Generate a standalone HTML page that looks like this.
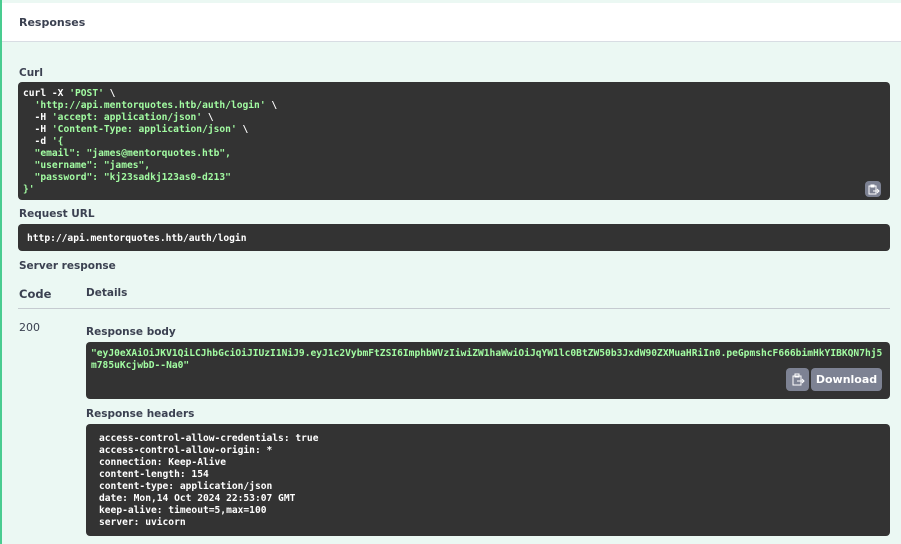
<!DOCTYPE html>
<html><head><meta charset="utf-8"><style>
*{margin:0;padding:0;box-sizing:border-box}
body{width:901px;height:544px;overflow:hidden;background:#ebf8f3;font-family:"DejaVu Sans","Liberation Sans",sans-serif;color:#3b4151;position:relative}
.abs{position:absolute}
.lbl{position:absolute;font-size:10.5px;font-weight:bold;color:#3b4151}
.box{position:absolute;background:#333;border-radius:4px}
pre{font-family:"DejaVu Sans Mono","Liberation Mono",monospace;font-size:9.6px;font-weight:bold;line-height:12px;color:#fff;white-space:pre}
.g{color:#a2fca2}
.btn{position:absolute;background:#7d8293;border-radius:4px}
</style></head><body>
<div class="abs" style="left:0;top:0;width:2px;height:544px;background:#49cc90"></div>
<div class="abs" style="left:2px;top:3px;width:899px;height:39px;background:#fff;border-bottom:1px solid #d8dde3"></div>
<div class="lbl" style="left:19px;top:16px;font-size:11px">Responses</div>

<div class="lbl" style="left:19px;top:67px">Curl</div>
<div class="box" style="left:18px;top:82px;width:872px;height:118px"><pre style="position:absolute;left:5px;top:6px">curl -X <span class="g">'POST'</span> \
  <span class="g">'http://api.mentorquotes.htb/auth/login'</span> \
  -H <span class="g">'accept: application/json'</span> \
  -H <span class="g">'Content-Type: application/json'</span> \
  -d <span class="g">'{
  "email": "james@mentorquotes.htb",
  "username": "james",
  "password": "kj23sadkj123as0-d213"
}'</span></pre>
<div class="btn" style="left:847px;top:99px;width:16px;height:16px"><svg width="16" height="16" viewBox="0 0 16 16" fill="none" stroke="#fff" stroke-width="1"><rect x="4" y="5" width="7" height="8"/><rect x="6" y="4" width="3" height="2"/><path d="M8 10h6M12 8l2 2-2 2"/></svg></div>
</div>

<div class="lbl" style="left:19px;top:208px">Request URL</div>
<div class="box" style="left:18px;top:224px;width:872px;height:27px"><pre style="position:absolute;left:9px;top:9px">http://api.mentorquotes.htb/auth/login</pre></div>

<div class="lbl" style="left:19px;top:260px">Server response</div>
<div class="lbl" style="left:19px;top:287px;font-size:11.5px">Code</div>
<div class="lbl" style="left:86px;top:287px">Details</div>
<div class="abs" style="left:18px;top:308px;width:872px;height:1px;background:#c5cbd0"></div>
<div class="abs" style="left:19px;top:321px;font-size:11px;color:#3b4151">200</div>

<div class="lbl" style="left:86px;top:326px">Response body</div>
<div class="box" style="left:86px;top:342px;width:804px;height:57px"><pre class="g" style="position:absolute;left:5px;top:6px">"eyJ0eXAiOiJKV1QiLCJhbGciOiJIUzI1NiJ9.eyJ1c2VybmFtZSI6ImphbWVzIiwiZW1haWwiOiJqYW1lc0BtZW50b3JxdW90ZXMuaHRiIn0.peGpmshcF666bimHkYIBKQN7hj5
m785uKcjwbD--Na0"</pre>
<div class="btn" style="left:700px;top:26px;width:23px;height:23px"><svg width="23" height="23" viewBox="0 0 23 23" fill="none" stroke="#fff" stroke-width="1"><rect x="7" y="8" width="8" height="9"/><rect x="9" y="6" width="4" height="3"/><path d="M11 13h7M16 11l2 2-2 2"/></svg></div>
<div class="btn" style="left:725px;top:26px;width:71px;height:23px;color:#fff;font-size:11px;font-weight:bold;text-align:center;line-height:23px">Download</div>
</div>

<div class="lbl" style="left:86px;top:408px">Response headers</div>
<div class="box" style="left:86px;top:424px;width:804px;height:112px"><pre style="position:absolute;left:13px;top:9px">access-control-allow-credentials: true
access-control-allow-origin: *
connection: Keep-Alive
content-length: 154
content-type: application/json
date: Mon,14 Oct 2024 22:53:07 GMT
keep-alive: timeout=5,max=100
server: uvicorn</pre></div>
</body></html>
